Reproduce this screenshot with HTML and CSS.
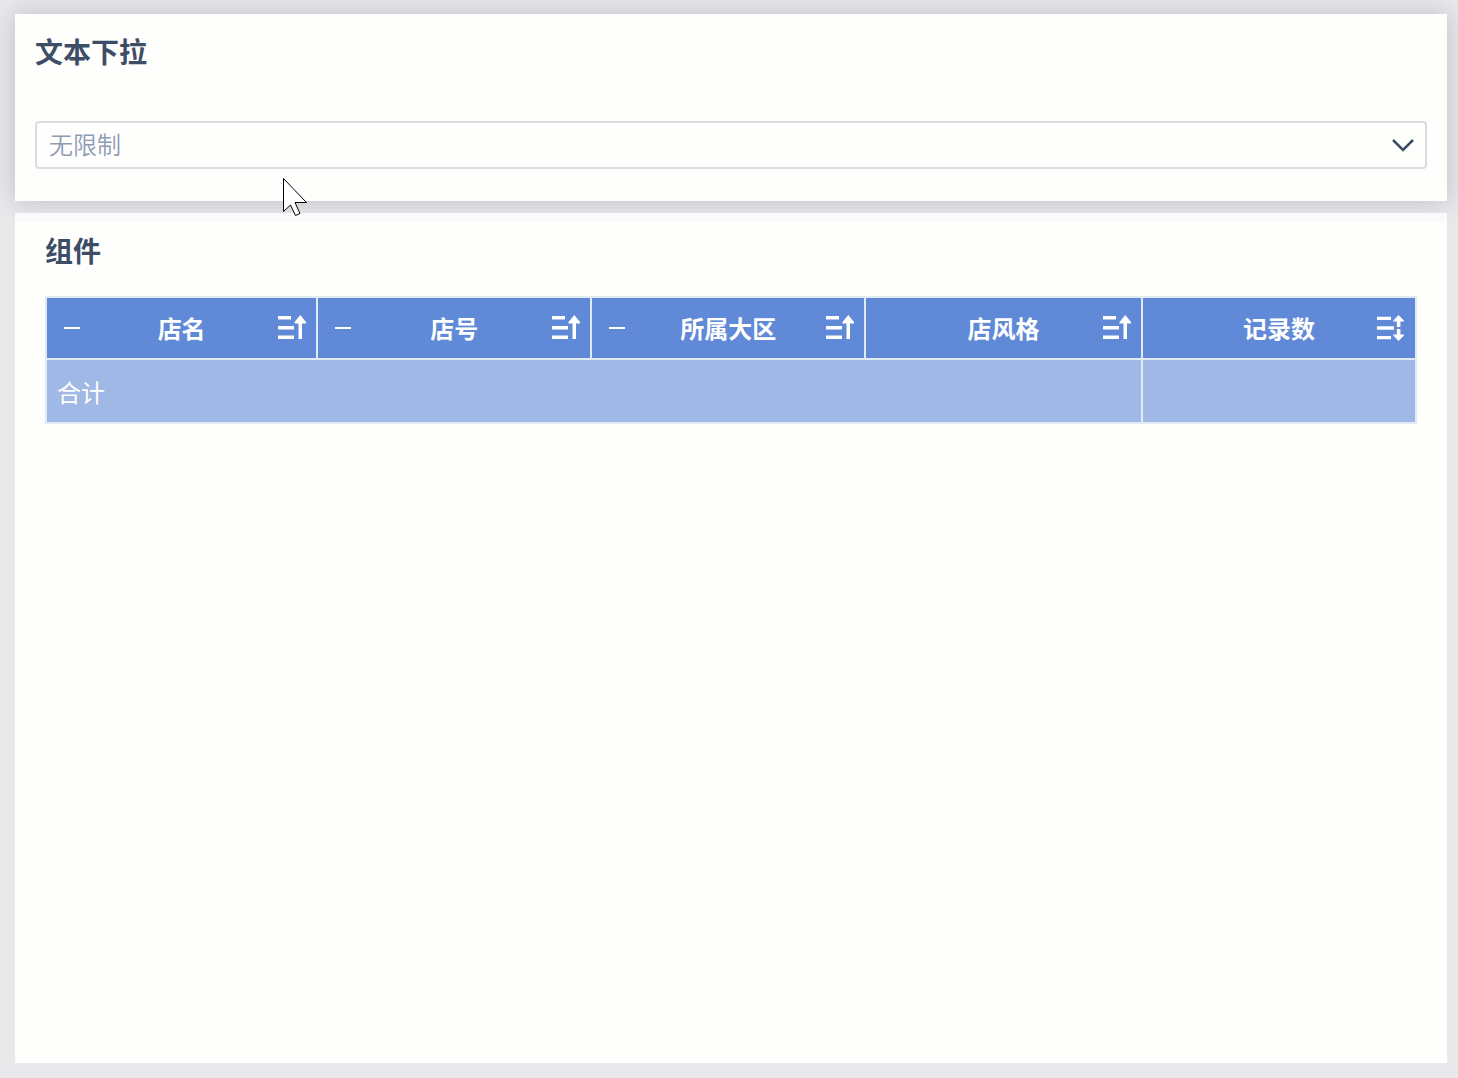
FILE: index.html
```html
<!DOCTYPE html>
<html lang="zh-CN">
<head>
    <meta charset="UTF-8">
    <meta name="viewport" content="width=device-width, initial-scale=1.0">
    <title>文本下拉</title>
    <link rel="stylesheet" href="styles.css">
</head>
<body>
    <svg class="symbols" aria-hidden="true">
        <symbol id="icon-minus" viewBox="0 0 16 16">
            <path d="M0 7h16v2H0z"/>
        </symbol>
        <symbol id="icon-asc" viewBox="0 0 28 26">
            <path d="M0 1h13v3.5H0zM0 11h16v3.5H0zM0 20.5h16V24H0zM20.500 24V8.500H16.500V7L22.300 0L28 7v1.500h-4V24z"/>
        </symbol>
        <symbol id="icon-sort" viewBox="0 0 28 26">
            <path d="M0 1.700h14v3.300H0zM0 11.300h17v3.500H0zM0 21h14v3.300H0zM19.800 12V6.500H16.300V5.500L21.500 0L27 5.500v1H23.400V12zM19.800 14v5.500H16.300v1L21.500 26L27 20.500v-1H23.400V14z"/>
        </symbol>
    </svg>

    <section class="panel filter">
        <label class="title" for="filter-value">文本下拉</label>
        <div class="select-box">
            <select id="filter-value">
                <option>无限制</option>
            </select>
            <svg class="chevron" viewBox="0 0 22 14" aria-hidden="true">
                <path d="M1 2l10 10L21 2"/>
            </svg>
        </div>
    </section>

    <main class="panel component">
        <h2 class="title">组件</h2>
        <table class="grid">
            <colgroup>
                <col class="col-first">
                <col class="col">
                <col class="col">
                <col class="col-style">
                <col class="col">
            </colgroup>
            <thead>
                <tr>
                    <th>
                        <div class="head">
                            <button class="fold" aria-label="收起店名"><svg><use href="#icon-minus"/></svg></button>
                            <span>店名</span>
                            <button class="sort" aria-label="店名升序"><svg><use href="#icon-asc"/></svg></button>
                        </div>
                    </th>
                    <th>
                        <div class="head">
                            <button class="fold" aria-label="收起店号"><svg><use href="#icon-minus"/></svg></button>
                            <span>店号</span>
                            <button class="sort" aria-label="店号升序"><svg><use href="#icon-asc"/></svg></button>
                        </div>
                    </th>
                    <th>
                        <div class="head">
                            <button class="fold" aria-label="收起所属大区"><svg><use href="#icon-minus"/></svg></button>
                            <span>所属大区</span>
                            <button class="sort" aria-label="所属大区升序"><svg><use href="#icon-asc"/></svg></button>
                        </div>
                    </th>
                    <th>
                        <div class="head">
                            <i></i>
                            <span>店风格</span>
                            <button class="sort" aria-label="店风格升序"><svg><use href="#icon-asc"/></svg></button>
                        </div>
                    </th>
                    <th>
                        <div class="head">
                            <i></i>
                            <span>记录数</span>
                            <button class="sort" aria-label="记录数排序"><svg><use href="#icon-sort"/></svg></button>
                        </div>
                    </th>
                </tr>
            </thead>
            <tbody>
                <tr>
                    <td colspan="4">合计</td>
                    <td></td>
                </tr>
            </tbody>
        </table>
    </main>

    <svg class="pointer" viewBox="0 0 26 39" aria-hidden="true">
        <path d="M1.500 .5v33l7-6.500 5 10.500 4.500-2-5-11h11.500z"/>
    </svg>
</body>
</html>
```

FILE: styles.css
```css
* {
    margin: 0;
    padding: 0;
    box-sizing: border-box;
}

body {
    font-family: "Noto Sans CJK SC", sans-serif;
    min-height: 100vh;
    display: flex;
    flex-direction: column;
    gap: 12px;
    padding: 14px 11px 15px 15px;
    background: #e9e9ec;
    color: #3d4d66;
    position: relative;
}

.symbols {
    display: none;
}

.panel {
    background: #fefefd;
}

.title {
    display: block;
    font-size: 28px;
    font-weight: 700;
    line-height: 40px;
}

.filter {
    padding: 17px 20px 32px;
    box-shadow: 0 0 24px rgba(30, 35, 55, 0.22);
}

.select-box {
    margin-top: 50px;
    display: grid;
    align-items: center;
}

.select-box > * {
    grid-area: 1 / 1;
}

.select-box select {
    appearance: none;
    width: 100%;
    height: 48px;
    padding: 0 48px 4px 12px;
    border: 2px solid #dcdcdf;
    border-radius: 4px;
    background: transparent;
    color: #8e9bb3;
    font-family: inherit;
    font-size: 24px;
    font-weight: 350;
}

.chevron {
    width: 22px;
    height: 14px;
    margin-right: 13px;
    justify-self: end;
    fill: none;
    stroke: #3d4d66;
    stroke-width: 2.5;
    pointer-events: none;
}

.component {
    flex: 1;
    padding: 17px 30px 30px;
    background: linear-gradient(#fafafd 9px, #fefefd 9px);
}

.grid {
    width: 100%;
    margin-top: 26px;
    table-layout: fixed;
    border-collapse: collapse;
    color: #fff;
    font-size: 24px;
}

.col {
    width: 20%;
}

.col-first {
    width: 19.8%;
}

.col-style {
    width: 20.2%;
}

.grid th,
.grid td {
    border: 2px solid #e1eaf7;
}

.grid th {
    height: 62px;
    background: #6089d7;
    font-weight: 700;
}

.grid td {
    height: 64px;
    padding: 0 10px;
    background: #9fb8e5;
}

.head {
    display: grid;
    grid-template-columns: 38px 1fr 38px;
    align-items: center;
    line-height: 36px;
}

.head button {
    display: flex;
    border: none;
    background: none;
    cursor: pointer;
}

.head svg {
    fill: #fff;
}

.fold {
    padding-left: 17px;
}

.fold svg {
    width: 16px;
    height: 16px;
}

.sort svg {
    width: 28px;
    height: 26px;
}

.pointer {
    position: absolute;
    left: 282px;
    top: 178px;
    width: 26px;
    height: 39px;
    fill: #fff;
    stroke: #000;
    stroke-width: 1;
    pointer-events: none;
}
```
